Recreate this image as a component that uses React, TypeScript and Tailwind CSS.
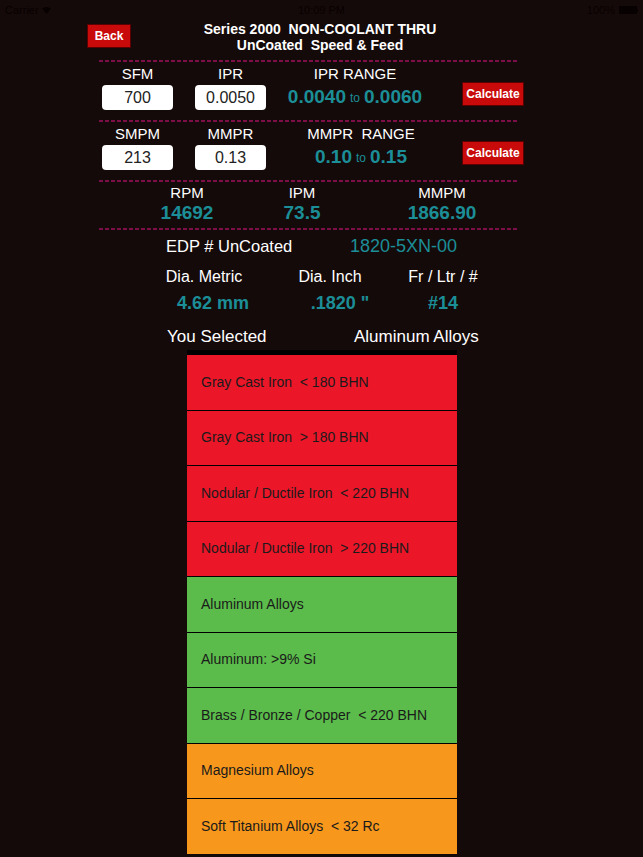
import React from "react"

const teal = "text-[#1b8e97]"

function Dashed() {
  return (
    <div className="ml-[99px] w-[418px] h-[2px] bg-[repeating-linear-gradient(90deg,#7d0f48_0px,#7d0f48_4px,transparent_4px,transparent_6px)]" />
  )
}

function Field({ value }: { value: string }) {
  return (
    <div className="w-[71px] h-[25px] rounded-[4px] bg-white flex items-center justify-center text-[16px] text-[#222]">
      {value}
    </div>
  )
}

function CalcButton() {
  return (
    <div className="w-[62px] h-[24px] bg-[#c80a0a] border border-[#5a0000] flex items-center justify-center text-[12px] text-white font-semibold">
      Calculate
    </div>
  )
}

const materials = [
  { name: "Gray Cast Iron  < 180 BHN", color: "bg-[#ec1629]" },
  { name: "Gray Cast Iron  > 180 BHN", color: "bg-[#ec1629]" },
  { name: "Nodular / Ductile Iron  < 220 BHN", color: "bg-[#ec1629]" },
  { name: "Nodular / Ductile Iron  > 220 BHN", color: "bg-[#ec1629]" },
  { name: "Aluminum Alloys", color: "bg-[#5bbc4b]" },
  { name: "Aluminum: >9% Si", color: "bg-[#5bbc4b]" },
  { name: "Brass / Bronze / Copper  < 220 BHN", color: "bg-[#5bbc4b]" },
  { name: "Magnesium Alloys", color: "bg-[#f7981d]" },
  { name: "Soft Titanium Alloys  < 32 Rc", color: "bg-[#f7981d]" },
]

export default function App() {
  return (
    <div
      className="w-[643px] h-[857px] overflow-hidden bg-[#150a0a] text-white"
      style={{ fontFamily: '"Liberation Sans", Arial, sans-serif' }}
    >
      {/* status bar */}
      <div className="h-[20px] flex items-center justify-between px-[5px] text-[11px] text-[#070101]">
        <div className="flex items-center gap-[3px] w-[120px]">
          <span>Carrier</span>
          <svg width="9" height="7" viewBox="0 0 9 7">
            <path d="M0 1.5 Q4.5 -1.5 9 1.5 L4.5 7 Z" fill="#070101" />
          </svg>
        </div>
        <span>10:09 PM</span>
        <div className="flex items-center justify-end gap-[4px] w-[120px]">
          <span>100%</span>
          <div className="flex items-center">
            <div className="w-[18px] h-[8px] bg-[#070101] rounded-[1px]" />
            <div className="w-[1px] h-[3px] bg-[#070101]" />
          </div>
        </div>
      </div>

      {/* header */}
      <div className="h-[40px] flex items-start">
        <div className="ml-[87px] mt-[4px] w-[44px] h-[24px] bg-[#c80a0a] border border-[#5a0000] flex items-center justify-center text-[12px] font-semibold">
          Back
        </div>
        <div className="ml-[58px] w-[262px] text-center text-[14px] font-bold leading-[16px] mt-[1px] whitespace-pre">
          <div>Series 2000  NON-COOLANT THRU</div>
          <div>UnCoated  Speed &amp; Feed</div>
        </div>
      </div>

      <Dashed />

      {/* SFM / IPR */}
      <div className="flex items-start mt-[2px] h-[49px]">
        <div className="ml-[102px] flex flex-col items-center">
          <div className="h-[21px] flex items-center text-[15px]">SFM</div>
          <Field value="700" />
        </div>
        <div className="ml-[22px] flex flex-col items-center">
          <div className="h-[21px] flex items-center text-[15px]">IPR</div>
          <Field value="0.0050" />
        </div>
        <div className="ml-[14px] w-[150px] flex flex-col items-center">
          <div className="h-[21px] flex items-center text-[15px]">IPR RANGE</div>
          <div className={`h-[25px] flex items-center text-[19px] font-bold ${teal}`}>
            0.0040<span className="text-[12px] font-normal mx-[4px]">to</span>0.0060
          </div>
        </div>
        <div className="ml-[32px] mt-[18px]">
          <CalcButton />
        </div>
      </div>

      <div className="mt-[7px]">
        <Dashed />
      </div>

      {/* SMPM / MMPR */}
      <div className="flex items-start mt-[2px] h-[49px]">
        <div className="ml-[102px] flex flex-col items-center">
          <div className="h-[21px] flex items-center text-[15px]">SMPM</div>
          <Field value="213" />
        </div>
        <div className="ml-[22px] flex flex-col items-center">
          <div className="h-[21px] flex items-center text-[15px]">MMPR</div>
          <Field value="0.13" />
        </div>
        <div className="ml-[30px] w-[130px] flex flex-col items-center">
          <div className="h-[21px] flex items-center text-[15px] whitespace-pre">MMPR  RANGE</div>
          <div className={`h-[25px] flex items-center text-[19px] font-bold ${teal}`}>
            0.10<span className="text-[12px] font-normal mx-[4px]">to</span>0.15
          </div>
        </div>
        <div className="ml-[36px] mt-[17px]">
          <CalcButton />
        </div>
      </div>

      <div className="mt-[7px]">
        <Dashed />
      </div>

      {/* RPM / IPM / MMPM */}
      <div className="flex mt-[1px] h-[45px]">
        {[
          ["RPM", "14692", "ml-[137px]"],
          ["IPM", "73.5", "ml-[15px]"],
          ["MMPM", "1866.90", "ml-[40px]"],
        ].map(([label, value, ml]) => (
          <div key={label} className={`${ml} w-[100px] flex flex-col items-center`}>
            <div className="h-[20px] flex items-center text-[15px]">{label}</div>
            <div className={`h-[20px] flex items-center text-[19px] font-bold ${teal}`}>{value}</div>
          </div>
        ))}
      </div>

      <Dashed />

      {/* EDP */}
      <div className="flex items-center h-[30px] mt-[1px]">
        <div className="ml-[166px] w-[184px] text-[16.5px]">EDP # UnCoated</div>
        <div className={`${teal} text-[18px]`}>1820-5XN-00</div>
      </div>

      {/* Dia */}
      <div className="flex mt-[5px] h-[56px]">
        {[
          ["Dia. Metric", "4.62 mm", "ml-[154px]", "w-[100px]", "pl-[18px]"],
          ["Dia. Inch", '.1820 "', "ml-[26px]", "w-[100px]", "pl-[20px]"],
          ["Fr / Ltr / #", "#14", "ml-[11px]", "w-[104px]", "pl-[0px]"],
        ].map(([label, value, ml, w, pl]) => (
          <div key={label} className={`${ml} ${w} flex flex-col items-center`}>
            <div className="h-[22px] flex items-center text-[16px]">{label}</div>
            <div className={`h-[30px] flex items-center text-[18px] font-bold ${pl} ${teal}`}>{value}</div>
          </div>
        ))}
      </div>

      {/* selected */}
      <div className="flex items-center h-[24px] mt-[3px] text-[17px]">
        <div className="ml-[167px] w-[187px]">You Selected</div>
        <div>Aluminum Alloys</div>
      </div>

      {/* material list */}
      <div className="ml-[187px] w-[270px] mt-[1px] bg-black pt-[5px] flex flex-col gap-[1px]">
        {materials.map((m) => (
          <div
            key={m.name}
            className={`${m.color} h-[54.5px] shrink-0 flex items-center pl-[14px] text-[14px] text-[#1a1a1a] whitespace-pre`}
          >
            {m.name}
          </div>
        ))}
      </div>
    </div>
  )
}
